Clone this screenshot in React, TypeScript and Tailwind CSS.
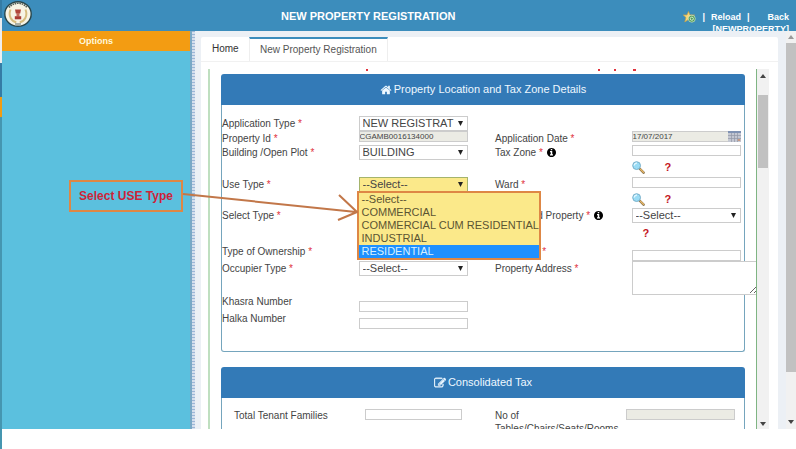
import React from "react";

const OPTIONS = ["--Select--", "COMMERCIAL", "COMMERCIAL CUM RESIDENTIAL", "INDUSTRIAL", "RESIDENTIAL"];

function HomeIcon() {
  return (
    <svg viewBox="0 0 1792 1792" className="size-3 fill-current" aria-hidden="true">
      <path d="M1472 992v480q0 26-19 45t-45 19h-384v-384h-256v384h-384q-26 0-45-19t-19-45v-480q0-1 .5-3t.5-3l575-474 575 474q1 2 1 6zm223-69l-62 74q-8 9-21 11h-3q-13 0-21-7l-692-577-692 577q-12 8-24 7-13-2-21-11l-62-74q-8-10-7-23.5t11-21.5l719-599q32-26 76-26t76 26l244 204v-195q0-14 9-23t23-9h192q14 0 23 9t9 23v408l219 182q10 8 11 21.5t-7 23.5z" />
    </svg>
  );
}

function EditIcon() {
  return (
    <svg viewBox="0 0 1792 1792" className="size-3 fill-current stroke-current stroke-[60]" aria-hidden="true">
      <path d="M888 1184l116-116-152-152-116 116v56h96v96h56zm440-720q-16-16-33 1l-350 350q-17 17-1 33t33-1l350-350q17-17 1-33zm80 594v190q0 119-84.5 203.5t-203.5 84.5h-832q-119 0-203.5-84.5t-84.5-203.5v-832q0-119 84.5-203.5t203.5-84.5h832q63 0 117 25 15 7 18 23 3 17-9 29l-49 49q-14 14-32 8-23-6-45-6h-832q-66 0-113 47t-47 113v832q0 66 47 113t113 47h832q66 0 113-47t47-113v-126q0-13 9-22l64-64q15-15 35-7t20 29zm-96-738l288 288-672 672h-288v-288zm444 132l-92 92-288-288 92-92q28-28 68-28t68 28l152 152q28 28 28 68t-28 68z" />
    </svg>
  );
}

function InfoIcon() {
  return (
    <svg viewBox="128 128 1536 1536" className="ml-1 inline-block size-[9px] fill-black align-[-1px]" aria-hidden="true">
      <path d="M1152 1376v-160q0-14-9-23t-23-9h-96v-512q0-14-9-23t-23-9h-320q-14 0-23 9t-9 23v160q0 14 9 23t23 9h96v320h-96q-14 0-23 9t-9 23v160q0 14 9 23t23 9h448q14 0 23-9t9-23zm-128-896v-160q0-14-9-23t-23-9h-192q-14 0-23 9t-9 23v160q0 14 9 23t23 9h192q14 0 23-9t9-23zm640 416q0 209-103 385.5t-279.5 279.5-385.5 103-385.5-103-279.5-279.5-103-385.5 103-385.5 279.5-279.5 385.5-103 385.5 103 279.5 279.5 103 385.5z" />
    </svg>
  );
}

function SearchIcon() {
  return (
    <svg viewBox="0 0 13 13" className="size-[13px]" aria-hidden="true">
      <path d="M7.5 7.5L11.6 11.7" stroke="#7d6a45" strokeWidth="2.4" strokeLinecap="round" />
      <path d="M8.4 8.2L11.5 11.3" stroke="#e6b566" strokeWidth="1.5" strokeLinecap="round" />
      <circle cx="4.6" cy="4.6" r="3.9" fill="#9adcf5" stroke="#78afc9" strokeWidth="1" />
      <path d="M2.3 4.6A2.4 2.4 0 0 1 5 2.2" fill="none" stroke="#e6f8ff" strokeWidth="1.3" />
    </svg>
  );
}

function CalendarIcon() {
  return (
    <svg viewBox="0 0 13 11" className="h-[11px] w-[13px]" aria-hidden="true">
      <rect width="13" height="11" fill="#c3c7d2" />
      <rect width="13" height="2" fill="#7f92b3" />
      <path d="M0 4.5H13M0 7.500H13M3.500 2V11M6.500 2V11M9.500 2V11" stroke="#9298a8" strokeWidth=".7" />
      <rect x="9.800" y="8" width="2.400" height="2" fill="#c69a84" />
    </svg>
  );
}

function FavouriteIcon() {
  return (
    <svg viewBox="0 0 13 12" className="h-3 w-[13px]" aria-hidden="true">
      <path d="M5.5 .5L7 4H11.5L8 6.6L9.2 11L5.5 8.4L1.8 11L3 6.6L.3 4H4z" fill="#f5d77c" stroke="#c9a045" strokeWidth=".7" />
      <circle cx="8.8" cy="7.7" r="3.5" fill="#4f9d57" stroke="#e3f1dd" strokeWidth=".6" />
      <circle cx="8.8" cy="7.7" r="1.600" fill="none" stroke="#e3f1dd" strokeWidth=".9" />
    </svg>
  );
}

function Emblem() {
  return (
    <svg viewBox="0 0 28 26" className="h-[26px] w-7" role="img" aria-label="State emblem">
      <ellipse cx="14" cy="13" rx="13.2" ry="12.3" fill="#f7f4e6" stroke="#28464c" strokeWidth="1.4" />
      <path d="M5 6.5A11 10 0 0 1 23 6.5" fill="none" stroke="#55605a" strokeWidth="1.6" strokeDasharray="1.6 .7" />
      <path d="M6.5 8.5C4 15 7.5 20.5 12.3 21.3M21.5 8.5C24 15 20.500 20.500 15.700 21.300" fill="none" stroke="#d6bd80" strokeWidth="2" />
      <path d="M11 8.500H17L16.200 12.500H11.800z" fill="#b0453b" />
      <path d="M12.500 12H15.500V15.500H12.500z" fill="#c0685c" />
      <path d="M10.800 15.200H17.200V18.300H10.800z" fill="#a83b34" />
      <path d="M11 23H17" stroke="#5f6d68" strokeWidth="1" />
    </svg>
  );
}

type LabelProps = { id?: string; text: string; required?: boolean; info?: boolean };

function FieldLabel({ id, text, required, info }: LabelProps) {
  return (
    <label htmlFor={id} className="block leading-[15px] whitespace-nowrap">
      {text}
      {required && <span className="text-[#e0323c]"> *</span>}
      {info && <InfoIcon />}
    </label>
  );
}

function Select({ id, options, highlighted }: { id: string; options: string[]; highlighted?: boolean }) {
  return (
    <div className="relative w-4/5">
      <select
        id={id}
        className={
          "block h-[15px] w-full appearance-none rounded-none border pr-3 pl-[3px] text-[11px] leading-[13px] text-[#444] " +
          (highlighted ? "border-[#a5b46c] bg-[#fbe98a]" : "border-[#ccc] bg-white")
        }
      >
        {options.map((o) => (
          <option key={o}>{o}</option>
        ))}
      </select>
      <svg viewBox="0 0 5 5" className="pointer-events-none absolute top-[5px] right-[5px] size-[5px] fill-[#222]" aria-hidden="true">
        <path d="M0 0H5L2.500 5z" />
      </svg>
    </div>
  );
}

const inputBase = "block h-[11px] rounded-none border border-[#ccc] px-0 text-[8px] leading-[9px] text-[#444] ";

function Lookup({ id }: { id: string }) {
  return (
    <div>
      <input id={id} className={inputBase + "w-4/5 bg-white"} />
      <div className="mt-[5px] flex items-center gap-5">
        <button type="button" aria-label="Search">
          <SearchIcon />
        </button>
        <Help />
      </div>
    </div>
  );
}

function Help() {
  return (
    <button type="button" className="text-[11px] leading-[11px] font-bold text-[#c3161c]">
      ?
    </button>
  );
}

function OpenList() {
  return (
    <ul className="absolute top-[14px] -left-0.5 z-10 border-2 border-[#de8745] bg-[#fbe98a] text-[11px] leading-[13px] whitespace-nowrap text-[#5b5432]">
      {OPTIONS.map((o) => (
        <li key={o} className={o === "RESIDENTIAL" ? "h-[13px] bg-[#1e90ff] pl-[3px] text-[#d8f0ff]" : "h-[13px] pl-[3px]"}>
          {o}
        </li>
      ))}
    </ul>
  );
}

function PanelHeading({ icon, children }: { icon: React.ReactNode; children: React.ReactNode }) {
  return (
    <h2 className="flex h-[31px] items-center justify-center gap-0.5 rounded-t-[3px] bg-[#337ab7] text-[11px] text-[#eef8ff]">
      {icon}
      {children}
    </h2>
  );
}

function Arrow({ down, dark }: { down?: boolean; dark?: boolean }) {
  return (
    <svg viewBox="0 0 6 4" className={"h-1 w-1.5 shrink-0 " + (dark ? "fill-[#444]" : "fill-[#999]")} aria-hidden="true">
      <path d={down ? "M0 0H6L3 4z" : "M0 4H6L3 0z"} />
    </svg>
  );
}

const row = "grid grid-cols-4 ";

export default function App() {
  return (
    <div className="relative flex h-screen overflow-hidden bg-white font-['Liberation_Sans',Arial,sans-serif] text-[10px] text-[#444]">
      <div className="flex w-0.5 shrink-0 flex-col bg-[#4596b0]">
        <div className="h-[18px] bg-[#347ba5]" />
        <div className="h-[45px] bg-[#eee]" />
        <div className="h-[34px] bg-[#357ca5]" />
        <div className="h-5 bg-[#f39c12]" />
      </div>

      <div className="flex min-w-0 flex-1 flex-col">
        <header className="flex h-[31px] shrink-0 overflow-hidden bg-[#3c8dbc] text-white">
          <div className="w-[188px] shrink-0 pt-px pl-0.5">
            <Emblem />
          </div>
          <h1 className="ml-[91px] pt-2.5 text-[11px] leading-[13px] font-bold whitespace-nowrap">NEW PROPERTY REGISTRATION</h1>
          <nav className="mr-[7px] ml-auto pt-[11px] text-right text-[9px] leading-3 font-bold">
            <div className="flex items-center">
              <button type="button" aria-label="Add to favourites">
                <FavouriteIcon />
              </button>
              <span className="mx-1.5">|</span>
              <a href="#reload">Reload</a>
              <span className="mx-1.5">|</span>
              <a href="#back" className="ml-3">
                Back
              </a>
            </div>
            <div>[NEWPROPERTY]</div>
          </nav>
        </header>

        <div className="flex min-h-0 flex-1">
          <aside className="w-[188px] shrink-0 bg-[#5bc0de]">
            <h2 className="h-5 bg-[#f39c12] text-center text-[9px] leading-5 font-bold text-[#fff8dc]">Options</h2>
          </aside>
          <div className="w-[5px] shrink-0 border-l-2 border-[#79a9c6] bg-[repeating-linear-gradient(#9db6d6_0_1px,#d5dfed_1px_3px)]" />

          <main className="flex min-w-0 flex-1 flex-col bg-[#ecf0f5] pt-1.5 pr-2 pl-1.5">
            <div className="flex min-h-0 flex-1 flex-col rounded-t-[2px] bg-white">
              <nav className="flex h-[25px] shrink-0 border-b border-[#f1f1f1]">
                <a href="#home" className="w-12 pt-1 pl-[11px] leading-4 text-[#333]">
                  Home
                </a>
                <a href="#registration" className="border-t-2 border-r border-l border-t-[#3c8dbc] border-r-[#eee] border-l-[#eee] px-[10px] pt-[3px] leading-4 text-[#555]">
                  New Property Registration
                </a>
              </nav>

              <div className="mt-[7px] mr-[9px] ml-[7px] flex min-h-0 flex-1">
                <form className="min-w-0 flex-1 overflow-hidden border-r border-l-2 border-r-[#7fb583] border-l-[#bfdfc0] pr-[11px] pl-[11px]">
                  <div className="flex h-[5px] items-start" aria-hidden="true">
                    <i className="ml-[145px] size-0.5 bg-[#e0323c]" />
                    <i className="ml-[230px] size-0.5 bg-[#e0323c]" />
                    <i className="ml-[14px] size-0.5 bg-[#e0323c]" />
                    <i className="ml-[17px] h-0.5 w-[3px] bg-[#e0323c]" />
                  </div>

                  <section>
                    <PanelHeading icon={<HomeIcon />}>Property Location and Tax Zone Details</PanelHeading>
                    <div className="rounded-b-[3px] border border-t-0 border-[#75a5bd] pt-[11px] pb-[22px]">
                      <div className="-mr-6">
                        <div className={row + "h-[15px]"}>
                          <FieldLabel id="app-type" text="Application Type" required />
                          <Select id="app-type" options={["NEW REGISTRAT"]} />
                        </div>
                        <div className={row + "h-[14px]"}>
                          <FieldLabel id="property-id" text="Property Id" required />
                          <input id="property-id" readOnly defaultValue="CGAMB0016134000" className={inputBase + "w-4/5 bg-[#ebebe4]"} />
                          <FieldLabel id="app-date" text="Application Date" required />
                          <div className="relative w-4/5">
                            <input id="app-date" readOnly defaultValue="17/07/2017" className={inputBase + "w-full bg-[#ebebe4]"} />
                            <button type="button" aria-label="Pick a date" className="absolute top-0 right-0 flex">
                              <CalendarIcon />
                            </button>
                          </div>
                        </div>
                        <div className={row + "h-8"}>
                          <FieldLabel id="building" text="Building /Open Plot" required />
                          <Select id="building" options={["BUILDING"]} />
                          <FieldLabel id="tax-zone" text="Tax Zone" required info />
                          <Lookup id="tax-zone" />
                        </div>
                        <div className={row + "h-[31px]"}>
                          <FieldLabel id="use-type" text="Use Type" required />
                          <div className="relative">
                            <Select id="use-type" options={OPTIONS} highlighted />
                            <OpenList />
                          </div>
                          <FieldLabel id="ward" text="Ward" required />
                          <Lookup id="ward" />
                        </div>
                        <div className={row + "h-9"}>
                          <FieldLabel id="select-type" text="Select Type" required />
                          <Select id="select-type" options={["--Select--"]} />
                          <FieldLabel id="mortgaged" text="Mortgaged Property" required info />
                          <div>
                            <Select id="mortgaged" options={["--Select--"]} />
                            <div className="mt-[5px] flex pl-[11px]">
                              <Help />
                            </div>
                          </div>
                        </div>
                        <div className={row + "h-[17px]"}>
                          <FieldLabel id="ownership" text="Type of Ownership" required />
                          <input id="ownership" className={inputBase + "w-4/5 bg-white"} />
                          <FieldLabel id="house-no" text="House No" required />
                          <input id="house-no" className={inputBase + "mt-1.5 w-4/5 bg-white"} />
                        </div>
                        <div className={row + "h-[33px]"}>
                          <FieldLabel id="occupier" text="Occupier Type" required />
                          <Select id="occupier" options={["--Select--"]} />
                          <FieldLabel id="address" text="Property Address" required />
                          <textarea id="address" className="z-10 block h-[34px] w-[127px] rounded-none border border-[#ccc] bg-white text-[8px]" />
                        </div>
                        <div className={row + "h-[17px]"}>
                          <FieldLabel id="khasra" text="Khasra Number" />
                          <input id="khasra" className={inputBase + "mt-[7px] w-4/5 bg-white"} />
                        </div>
                        <div className={row + "h-[18px]"}>
                          <FieldLabel id="halka" text="Halka Number" />
                          <input id="halka" className={inputBase + "mt-[7px] w-4/5 bg-white"} />
                        </div>
                      </div>
                    </div>
                  </section>

                  <section className="mt-[15px]">
                    <PanelHeading icon={<EditIcon />}>Consolidated Tax</PanelHeading>
                    <div className="grid h-24 grid-cols-4 border-x border-[#75a5bd] pt-[11px] leading-[13px]">
                      <label htmlFor="tenants" className="pl-3 whitespace-nowrap">
                        Total Tenant Families
                      </label>
                      <div className="pl-3">
                        <input id="tenants" className={inputBase + "w-[97px] bg-white"} />
                      </div>
                      <label htmlFor="rooms" className="pl-3">
                        No of
                        <br />
                        Tables/Chairs/Seats/Rooms
                      </label>
                      <div className="pl-3">
                        <input id="rooms" readOnly className={inputBase + "w-[109px] bg-[#ebebe4]"} />
                      </div>
                    </div>
                  </section>
                </form>

                <div className="flex w-3 shrink-0 flex-col items-center bg-[#f1f1f1] pt-[5px] pb-[3px]" aria-hidden="true">
                  <Arrow dark />
                  <div className="mt-[17px] h-[73px] w-2.5 bg-[#c1c1c1]" />
                  <div className="flex-1" />
                  <Arrow down dark />
                </div>
              </div>
            </div>
          </main>

          <div className="flex w-2.5 shrink-0 flex-col items-center bg-[#f1f1f1] pt-1 pb-[5px]" aria-hidden="true">
            <Arrow />
            <div className="mt-1 mb-12 w-full flex-1 bg-[#c1c1c1]" />
            <Arrow down dark />
          </div>
        </div>
        <footer className="h-5 shrink-0 bg-white" />
      </div>

      <div className="absolute top-[180px] left-[69px] z-20 flex h-8 w-[114px] items-center justify-center border-2 border-[#de8745] text-[12px] font-bold whitespace-nowrap text-[#cf2338]">
        Select USE Type
      </div>
      <svg viewBox="0 0 176 30" className="absolute top-[192px] left-[182px] z-20 h-[30px] w-44" aria-hidden="true">
        <path d="M1 2L174 20M157 3L175 20L156 28" fill="none" stroke="#c27749" strokeWidth="2" />
      </svg>
    </div>
  );
}
